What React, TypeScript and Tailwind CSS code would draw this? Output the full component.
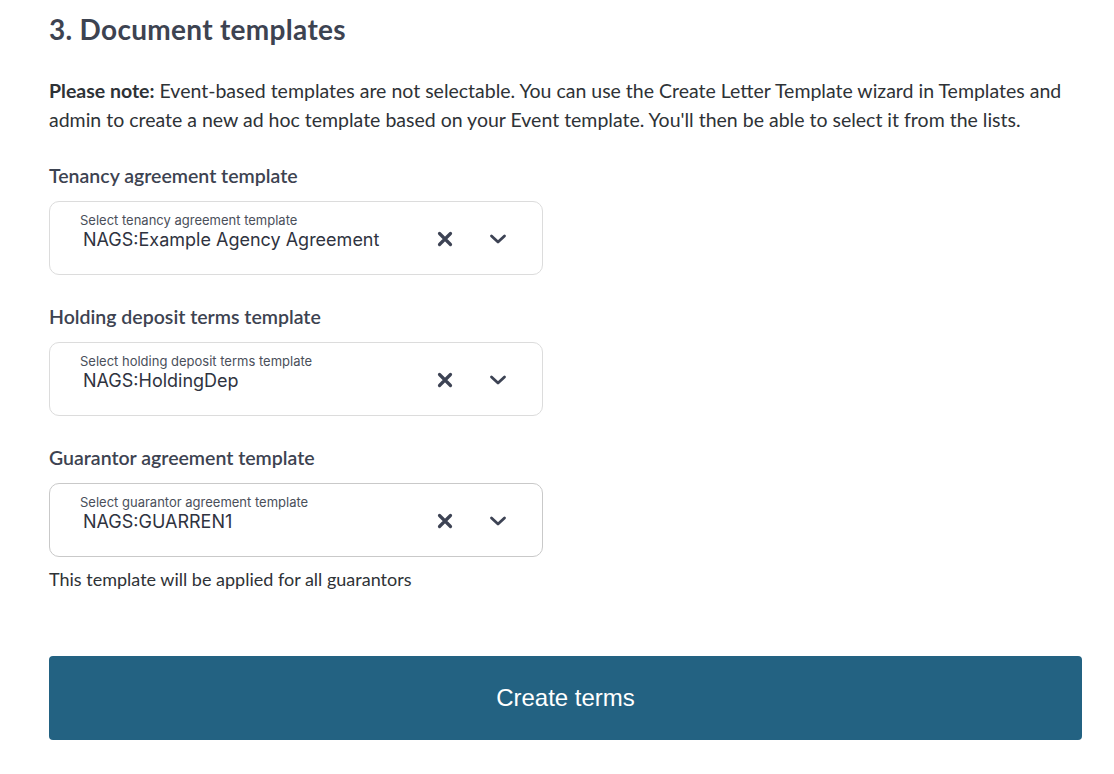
import React from 'react';

const templates = [
  {
    label: 'Tenancy agreement template',
    placeholder: 'Select tenancy agreement template',
    value: 'NAGS:Example Agency Agreement',
  },
  {
    label: 'Holding deposit terms template',
    placeholder: 'Select holding deposit terms template',
    value: 'NAGS:HoldingDep',
  },
  {
    label: 'Guarantor agreement template',
    placeholder: 'Select guarantor agreement template',
    value: 'NAGS:GUARREN1',
  },
];

const ClearIcon = () => (
  <svg width="16" height="16" viewBox="0 0 16 16" fill="none">
    <path d="M2.5 2.5L13.5 13.5M13.5 2.5L2.5 13.5" stroke="#3d4354" strokeWidth="3.2" strokeLinecap="round" />
  </svg>
);

const ChevronIcon = () => (
  <svg width="18" height="12" viewBox="0 0 18 12" fill="none">
    <path d="M2.5 3L9 9L15.5 3" stroke="#3d4354" strokeWidth="2.8" strokeLinecap="round" strokeLinejoin="round" />
  </svg>
);

const TemplateSelect: React.FC<{ placeholder: string; value: string; darker?: boolean }> = ({
  placeholder,
  value,
  darker,
}) => (
  <div
    className={`w-[494px] h-[74px] rounded-[10px] border bg-white flex items-start ${
      darker ? 'border-[#c9c9c9]' : 'border-[#dcdcdc]'
    }`}
  >
    <div className="flex-1 pl-[30px] pt-[10px] font-['Inter',sans-serif]">
      <div className="text-[13px] leading-[16px] text-[#4a4f5a]">{placeholder}</div>
      <div className="pl-[3px] text-[18px] leading-[24px] text-[#2f3340]">{value}</div>
    </div>
    <div className="flex items-center pt-[29px] pr-[35px] gap-[36px]">
      <ClearIcon />
      <ChevronIcon />
    </div>
  </div>
);

export default function App() {
  return (
    <div className="min-h-screen bg-white pl-[49px] pr-[32px] font-['Lato',sans-serif]">
      <h2 className="pt-[11px] text-[28px] leading-[36px] font-bold tracking-[0.3px] text-[#3d4351]">
        3. Document templates
      </h2>

      <p className="mt-[29px] text-[19.5px] leading-[29px] text-[#2e3236]">
        <span className="font-bold">Please note:</span> Event-based templates are not selectable. You can use the
        Create Letter Template wizard in Templates and admin to create a new ad hoc template based on your Event
        template. You'll then be able to select it from the lists.
      </p>

      {templates.map((t, i) => (
        <div key={t.label} className="mt-[30px]">
          <div className="mb-[13px] text-[19.5px] leading-[24px] font-semibold text-[#3d4351]">{t.label}</div>
          <TemplateSelect placeholder={t.placeholder} value={t.value} darker={i === 2} />
        </div>
      ))}

      <p className="mt-[11px] text-[18px] leading-[22px] text-[#2e3236]">
        This template will be applied for all guarantors
      </p>

      <button className="mt-[66px] w-full h-[84px] rounded-[4px] bg-[#236282] text-white text-[24px] font-['Liberation_Sans',Arial,sans-serif]">
        Create terms
      </button>
    </div>
  );
}
